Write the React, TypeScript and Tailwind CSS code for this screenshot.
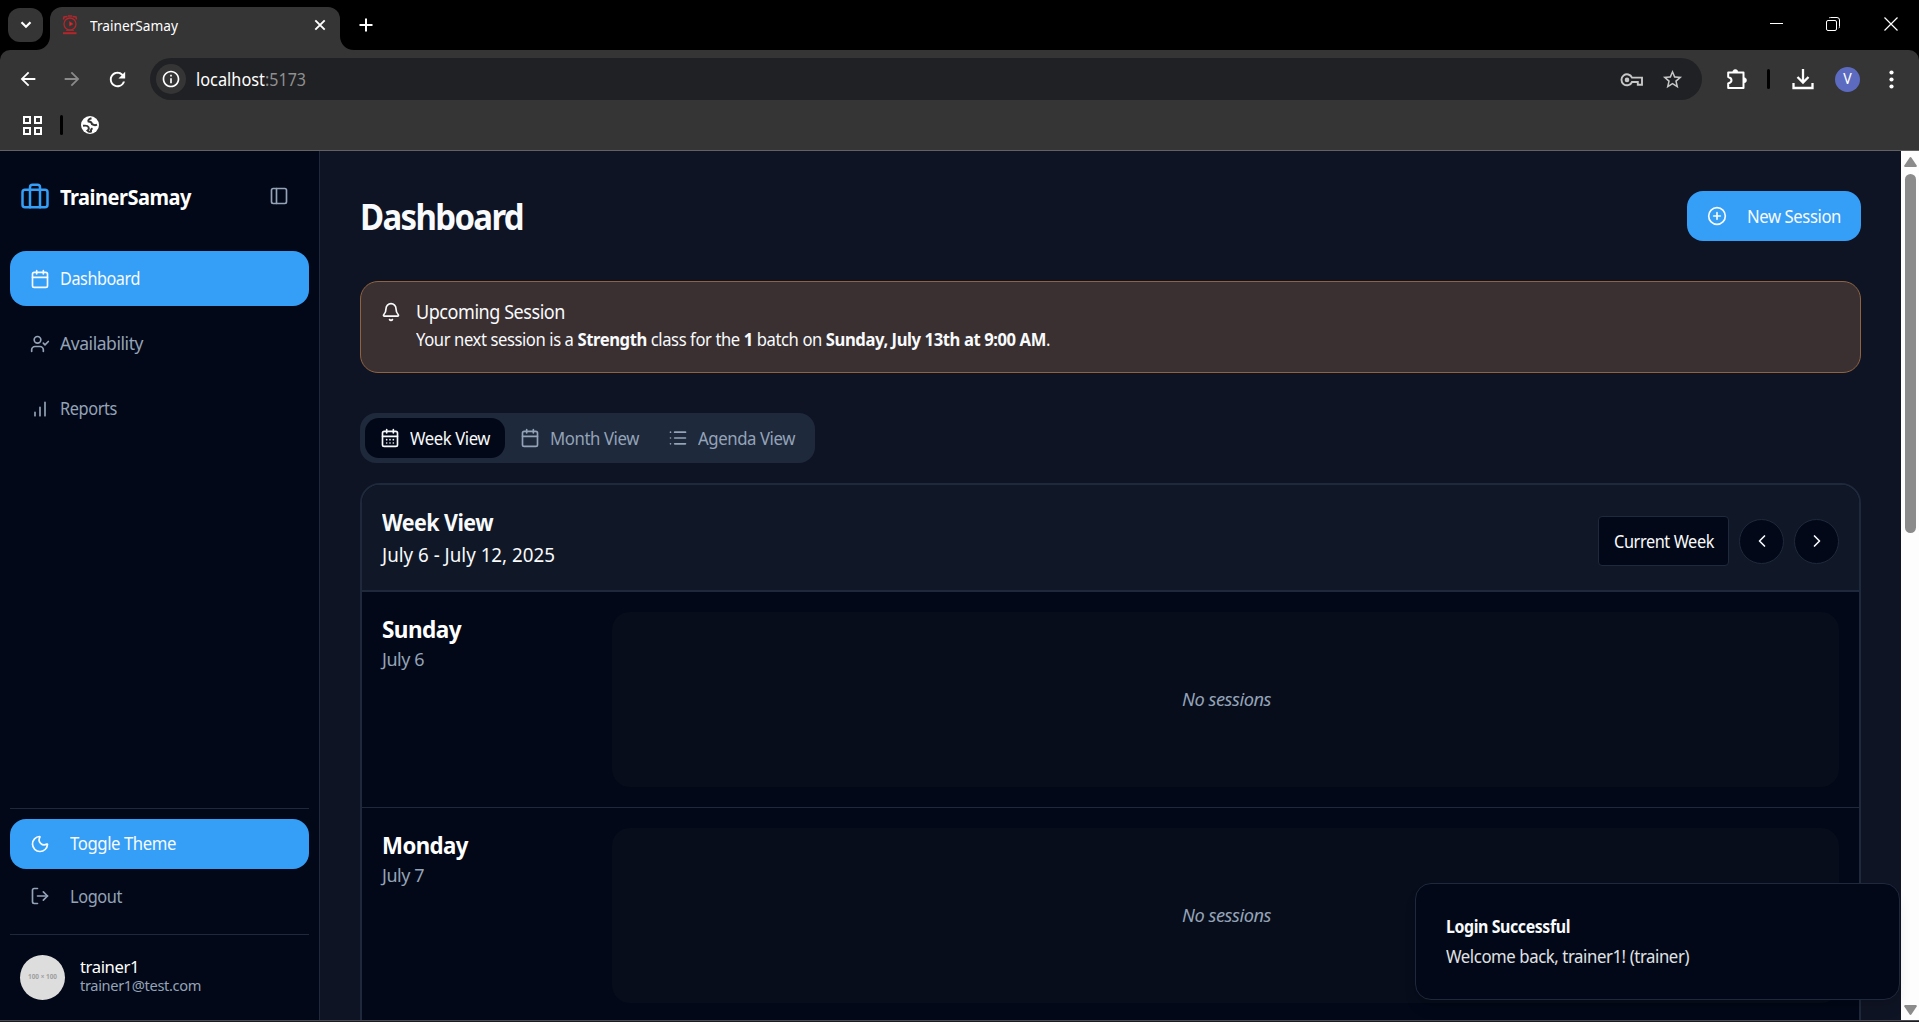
import { ReactNode, useLayoutEffect, useRef } from "react";
import {
  Bell, Calendar, CalendarDays, ChevronLeft, ChevronRight, CirclePlus, List, LogOut, Moon, PanelLeft, UserCheck,
} from "lucide-react";
import { MdArrowBack, MdArrowForward, MdRefresh, MdInfoOutline, MdStarOutline } from "react-icons/md";

/* Text condensed or stretched horizontally to a fixed measure. */
function Fit({ w, className = "", children }: { w: number; className?: string; children: ReactNode }) {
  const ref = useRef<HTMLSpanElement>(null);
  useLayoutEffect(() => {
    const el = ref.current;
    if (el && el.offsetWidth) {
      el.style.transform = "none";
      el.style.transform = `scaleX(${w / el.getBoundingClientRect().width})`;
    }
  }, [w]);
  return (
    <span className={`flex shrink-0 whitespace-nowrap ${className}`} style={{ width: w }}>
      <span ref={ref} className="block shrink-0 origin-left whitespace-pre">{children}</span>
    </span>
  );
}

function Favicon() {
  return (
    <svg width="16" height="20" viewBox="0 0 16 20" fill="none" stroke="#b3262b">
      <circle cx="8" cy="9" r="6" strokeWidth="1.3" />
      <path d="M1.5 4.5 L2 2 L5.5 1.5 M14.5 4.5 L14 2 L10.5 1.5 M6 1h4" strokeWidth="1.5" />
      <path d="M7.5 6.5v4.5l3.5-2z" fill="#e8262b" strokeWidth="0.6" />
      <path d="M1 18.2h13.5" strokeWidth="2" />
      <path d="M4 15.5h8" strokeWidth="0.8" />
    </svg>
  );
}

function KeyIcon({ className = "" }: { className?: string }) {
  return (
    <svg className={className} width="24" height="14" viewBox="0 0 24 14" fill="none" stroke="#c7c7c7" strokeWidth="1.9">
      <path d="M12 4.600h10v7.200h-4.200V9H12a5.500 5.500 0 1 1 0-4.400z" />
      <circle cx="7" cy="6.900" r="2.300" fill="#c7c7c7" stroke="none" />
    </svg>
  );
}

function PuzzleIcon({ className = "" }: { className?: string }) {
  return (
    <svg className={className} width="22" height="22" viewBox="0 0 22 22" fill="none" stroke="#fff" strokeWidth="2" strokeLinejoin="round">
      <path d="M2.200 4.500H17.500V20H2.200V15.500Q5.500 14.500 5.500 12.200T2.200 9z" />
      <path d="M6.800 4a2.500 2.500 0 0 1 5 0zM18 9.700a2.500 2.500 0 0 1 0 5z" fill="#fff" strokeWidth=".6" />
    </svg>
  );
}

function GlobeIcon({ className = "" }: { className?: string }) {
  return (
    <svg className={className} width="18" height="18" viewBox="0 0 18 18" fill="none">
      <circle cx="9" cy="9" r="9" fill="#fff" />
      <path d="M2 9.800Q6.500 9 7.500 11.200T6.500 14.500Q8 16.200 10 15.500Q9.500 13.500 11.500 12.300" stroke="#353535" strokeWidth="1.900" />
      <path d="M10.500 2.200Q6.500 3.500 7.500 5.500Q10.800 5.800 11 8.200Q13.500 9.800 16 8.700" stroke="#353535" strokeWidth="2" />
    </svg>
  );
}

function Chrome() {
  return (
    <header className="shrink-0 bg-black text-white">
      <div className="flex h-[50px] pl-2">
        <div className="mt-2 flex h-[34px] w-[35px] items-center justify-center rounded-xl bg-[#353535]">
          <svg width="12" height="8" viewBox="0 0 12 8" fill="none" stroke="#fff" strokeWidth="2.2"><path d="M1.5 1.3 6 5.8l4.5-4.5" /></svg>
        </div>
        <svg className="-ml-[7px] self-end" width="14" height="14" viewBox="0 0 14 14" fill="#353535"><path d="M14 0v14H0C8 14 14 8 14 0z" /></svg>
        <div className="mt-[7px] flex w-[290px] items-center rounded-t-xl bg-[#353535] pr-[14px] pl-3 pb-[7px]">
          <Favicon />
          <Fit w={88} className="ml-[12px] text-[15px] leading-5">TrainerSamay</Fit>
          <svg className="ml-auto" width="12" height="12" viewBox="0 0 12 12" stroke="#fff" strokeWidth="1.9"><path d="m1.3 1.3 9.4 9.4m0-9.4-9.4 9.4" /></svg>
        </div>
        <svg className="self-end" width="14" height="14" viewBox="0 0 14 14" fill="#353535"><path d="M0 0v14h14C6 14 0 8 0 0z" /></svg>
        <svg className="mt-[18px] ml-[5px]" width="14" height="14" viewBox="0 0 14 14" stroke="#fff" strokeWidth="2"><path d="M7 .5v13M.5 7h13" /></svg>
        <div className="mt-[17px] mr-[21px] ml-auto flex h-[14px]">
          <svg width="14" height="14" stroke="#fff"><path d="M0 6.5h13" /></svg>
          <svg className="ml-[42px]" width="14" height="14" viewBox="0 0 14 14" fill="none" stroke="#fff"><rect x=".5" y="3.5" width="10" height="10" rx="1.5" /><path d="M3 1.200Q3.400.5 4.500.5H11Q13.500.5 13.500 3V9.500Q13.500 10.800 12.800 11.200" /></svg>
          <svg className="ml-[44px]" width="14" height="14" viewBox="0 0 14 14" stroke="#fff" strokeWidth="1.2"><path d="m.5.5 13 13m0-13-13 13" /></svg>
        </div>
      </div>
      <div className="h-[100px] rounded-t-[10px] bg-[#353535]">
        <div className="flex h-[58px] items-center pl-[17px]">
          <MdArrowBack size={22} />
          <MdArrowForward size={22} className="ml-[22px] text-[#8a8a8a]" />
          <MdRefresh size={23} className="ml-[23px]" />
          <div className="ml-[21px] flex h-[42px] w-[1552px] items-center rounded-full bg-[#202124] pr-[18px] pl-1.5">
            <div className="flex size-[30px] items-center justify-center rounded-full bg-[#353535]"><MdInfoOutline size={20} /></div>
            <Fit w={69} className="ml-[10px] text-[17.500px]">localhost</Fit>
            <Fit w={41} className="text-[17.5px] text-[#8f8f8f]">:5173</Fit>
            <KeyIcon className="mt-px ml-auto" />
            <MdStarOutline size={23} className="ml-[17px] text-[#c7c7c7]" />
          </div>
          <PuzzleIcon className="ml-[24px]" />
          <div className="ml-[19px] h-5 w-[3px] rounded bg-black" />
          <svg className="ml-[22px]" width="22" height="22" viewBox="0 0 22 22" fill="none" stroke="#fff" strokeWidth="2.3"><path d="M11 1v13M5.500 9l5.500 5.500L16.500 9M1.500 15v5h19v-5" /></svg>
          <div className="ml-[21px] flex size-[25px] items-center justify-center rounded-full bg-[#5c6bc0] font-['Roboto'] text-[14px]">V</div>
          <svg className="ml-[29px]" width="5" height="19" fill="#fff"><circle cx="2.500" cy="2.500" r="2.100" /><circle cx="2.500" cy="9.500" r="2.100" /><circle cx="2.500" cy="16.500" r="2.100" /></svg>
        </div>
        <div className="flex h-[34px] items-center pl-[23px]">
          <svg width="19" height="19" fill="none" stroke="#fff" strokeWidth="2"><path d="M1 1h6v6H1zM12 1h6v6h-6zM1 12h6v6H1zM12 12h6v6h-6z" /></svg>
          <div className="ml-[18px] h-5 w-[3px] rounded bg-black" />
          <GlobeIcon className="ml-[18px]" />
        </div>
      </div>
      <div className="h-px bg-[#626262]" />
    </header>
  );
}

function Briefcase() {
  return (
    <svg width="30" height="30" viewBox="0 0 24 24" fill="none" stroke="#359ef7" strokeWidth="2" strokeLinecap="round" strokeLinejoin="round">
      <path d="M16 21V5a2 2 0 0 0-2-2h-4a2 2 0 0 0-2 2v16" />
      <rect width="20" height="14" x="2" y="7" rx="2" />
    </svg>
  );
}

function BarsIcon() {
  return (
    <svg width="20" height="20" viewBox="0 0 24 24" fill="none" stroke="currentColor" strokeWidth="2" strokeLinecap="round">
      <path d="M12 20V10M18 20V4M6 20v-4" />
    </svg>
  );
}

function Sidebar() {
  return (
    <aside className="flex w-80 shrink-0 flex-col border-r border-[#1e293b] bg-[#020817] px-2.5 text-[#94a3b8]">
      <div className="flex h-[90px] items-center pl-2.5">
        <Briefcase />
        <Fit w={131} className="ml-2.5 text-[22px] font-bold tracking-tight text-white">TrainerSamay</Fit>
        <PanelLeft size={20} className="ml-[78px]" />
      </div>
      <nav className="mt-2.5 flex flex-col gap-2.5">
        <div className="flex h-[55px] items-center gap-2.5 rounded-2xl bg-[#359ef7] pl-5 text-slate-50"><Calendar size={20} /><Fit w={80} className="text-[17.5px] tracking-tight">Dashboard</Fit></div>
        <div className="flex h-[55px] items-center gap-2.5 pl-5"><UserCheck size={20} /><Fit w={83} className="text-[17.5px] tracking-tight">Availability</Fit></div>
        <div className="flex h-[55px] items-center gap-2.5 pl-5"><BarsIcon /><Fit w={57} className="text-[17.5px] tracking-tight">Reports</Fit></div>
      </nav>
      <div className="mt-auto border-t border-[#1e293b] pt-2.5">
        <div className="flex h-[50px] items-center gap-5 rounded-2xl bg-[#359ef7] pl-5 text-slate-50"><Moon size={20} /><Fit w={106} className="pb-0.5 text-[17.5px] tracking-tight">Toggle Theme</Fit></div>
        <div className="mt-0.5 flex h-[50px] items-center gap-5 pl-5"><LogOut size={20} /><Fit w={52} className="text-[17.5px] tracking-tight">Logout</Fit></div>
      </div>
      <div className="mt-[13px] flex h-[86px] items-center gap-[15px] border-t border-[#1e293b] pl-2.5">
        <div className="flex size-[45px] items-center justify-center rounded-full bg-[#dddddd] text-[#a0a0a0]"><Fit w={29} className="text-[7px] font-bold">100 × 100</Fit></div>
        <div className="pb-1">
          <Fit w={59} className="h-[18px] text-[17px] leading-[18px] tracking-tight text-white">trainer1</Fit>
          <Fit w={121} className="h-[18px] text-[14.5px] leading-[18px] tracking-tight">trainer1@test.com</Fit>
        </div>
      </div>
    </aside>
  );
}

function DayRow({ day, w, date }: { day: string; w: number; date: string }) {
  return (
    <div className="flex h-[216px] shrink-0 border-b border-[#1e293b] p-5 pb-5">
      <div className="w-[230px]">
        <Fit w={w} className="h-[35px] text-[24px] leading-[33px] font-bold tracking-tight text-white">{day}</Fit>
        <Fit w={42} className="h-[25px] text-[17.5px] leading-[25px] tracking-tight text-[#94a3b8]">{date}</Fit>
      </div>
      <div className="flex h-[175px] flex-1 items-center justify-center rounded-[18px] bg-[#070d1a] pl-0.5 text-[#94a3b8]">
        <Fit w={89} className="text-[17.5px] tracking-tight italic">No sessions</Fit>
      </div>
    </div>
  );
}

function Main() {
  return (
    <main className="flex flex-1 flex-col overflow-hidden bg-[#0f1424] px-10 pt-10 text-slate-50">
      <div className="flex h-[50px] shrink-0 items-center justify-between">
        <Fit w={163} className="text-[36.500px] font-bold tracking-[-0.05em]">Dashboard</Fit>
        <button className="flex h-[50px] w-[174px] items-center rounded-2xl bg-[#359ef7] pl-5"><CirclePlus size={20} /><Fit w={94} className="ml-5 text-[17.5px] tracking-tight">New Session</Fit></button>
      </div>
      <section className="mt-10 flex h-[92px] shrink-0 gap-[15px] rounded-[18px] border border-[#8f6340] bg-[#3a3031] pt-5 pl-5">
        <Bell size={20} />
        <div>
          <Fit w={149} className="h-[25px] text-[19px] leading-[20px] tracking-tight">Upcoming Session</Fit>
          <Fit w={634} className="h-[28px] text-[17.5px] leading-[25px] tracking-tight">Your next session is a <b>Strength</b> class for the <b>1</b> batch on <b>Sunday, July 13th at 9:00 AM</b>.</Fit>
        </div>
      </section>
      <div className="mt-10 flex h-[50px] w-[455px] shrink-0 items-center rounded-2xl bg-[#1e293b] p-[5px] text-[#94a3b8]">
        <div className="flex h-10 w-[140px] items-center gap-2.5 rounded-[14px] bg-[#020817] pl-[15px] text-slate-50"><CalendarDays size={20} /><Fit w={80} className="text-[17.5px] tracking-tight">Week View</Fit></div>
        <div className="flex w-[149px] items-center gap-2.5 pl-[15px]"><Calendar size={20} /><Fit w={89} className="text-[17.5px] tracking-tight">Month View</Fit></div>
        <div className="flex items-center gap-2.5 pl-[14px]"><List size={20} /><Fit w={97} className="text-[17.5px] tracking-tight">Agenda View</Fit></div>
      </div>
      <section className="mt-5 flex h-[700px] shrink-0 flex-col overflow-hidden rounded-[20px] border-2 border-[#1e293b] bg-[#020817]">
        <div className="flex h-[107px] shrink-0 items-center border-b-2 border-[#1e293b] bg-[#101827] px-5">
          <div className="flex-1">
            <Fit w={111} className="h-[34px] text-[24px] leading-[34px] font-bold tracking-tight">Week View</Fit>
            <Fit w={173} className="h-[31px] text-[19.5px] leading-[31px]">July 6 - July 12, 2025</Fit>
          </div>
          <div className="mt-[7px] flex items-center gap-2.5">
            <button className="flex h-[50px] w-[131px] items-center justify-center rounded border border-[#1e293b] bg-[#020817]"><Fit w={100} className="text-[17.5px] tracking-tight">Current Week</Fit></button>
            <button className="flex size-[45px] items-center justify-center rounded-full border border-[#1e293b] bg-[#020817]"><ChevronLeft size={20} /></button>
            <button className="flex size-[45px] items-center justify-center rounded-full border border-[#1e293b] bg-[#020817]"><ChevronRight size={20} /></button>
          </div>
        </div>
        <DayRow day="Sunday" w={79} date="July 6" />
        <DayRow day="Monday" w={86} date="July 7" />
      </section>
    </main>
  );
}

function Scrollbar() {
  return (
    <div className="flex w-[18px] shrink-0 flex-col items-center bg-[#fdfdfd] pt-1.5 pb-[5px]">
      <svg width="13" height="10" fill="#8b8b8b"><path d="M6.500 0Q7 0 7.500.7L12.700 8.500Q13 10 12 10H1Q0 10 .3 8.500L5.500.7Q6 0 6.500 0z" /></svg>
      <div className="mt-[7px] h-[359px] w-[11px] rounded-full bg-[#8b8b8b]" />
      <svg className="mt-auto" width="13" height="10" fill="#8b8b8b"><path d="M6.500 10Q7 10 7.500 9.300L12.700 1.500Q13 0 12 0H1Q0 0 .3 1.500L5.500 9.300Q6 10 6.500 10z" /></svg>
    </div>
  );
}

export default function App() {
  return (
    <div className="relative flex h-[1022px] w-[1919px] flex-col overflow-hidden bg-[#020817] font-['Noto_Sans','Open_Sans',sans-serif]">
      <Chrome />
      <div className="flex h-[869px] shrink-0 overflow-hidden">
        <Sidebar />
        <Main />
        <Scrollbar />
      </div>
      <div className="h-px bg-[#4b4b4f]" />
      <div className="h-px bg-[#1a1c24]" />
      <div className="absolute right-[19px] bottom-[22px] flex h-[117px] w-[485px] flex-col justify-center rounded-2xl border border-[#1e293b] bg-[#020817] pb-0.5 pl-[30px] text-slate-50 shadow-lg">
        <Fit w={124} className="h-[30px] text-[17.5px] leading-[30px] font-bold tracking-tight">Login Successful</Fit>
        <Fit w={243} className="h-[30px] text-[17.5px] leading-[30px] tracking-tight opacity-90">Welcome back, trainer1! (trainer)</Fit>
      </div>
    </div>
  );
}
